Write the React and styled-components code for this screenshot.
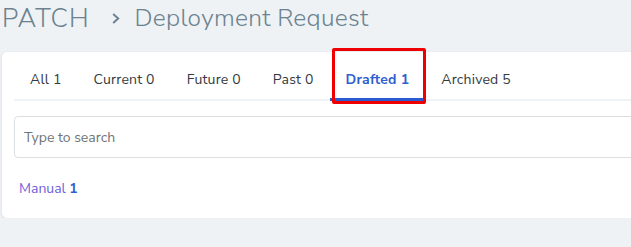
import React from "react";
import styled, { createGlobalStyle } from "styled-components";

const GlobalStyle = createGlobalStyle`
  html, body {
    margin: 0;
    padding: 0;
    background: #eef2f5;
    font-family: "Nunito Sans", Lato, "Open Sans", sans-serif;
    overflow: hidden;
  }
`;

const Page = styled.div`
  padding: 0 0 0 2px;
  width: 700px;
`;

const Header = styled.h1`
  display: flex;
  align-items: center;
  margin: 0;
  height: 36px;
  font-weight: 300;
  color: #6d8290;
`;

const Crumb = styled.span`
  font-size: ${(p) => p.size}px;
  letter-spacing: ${(p) => p.spacing}px;
`;

const Chevron = styled.svg`
  width: 8px;
  height: 11px;
  margin: 1px 15px 0 22px;
`;

const Card = styled.div`
  margin-top: 16px;
  background: #fff;
  border-radius: 5px;
  box-shadow: 0 1px 3px rgba(40, 60, 80, 0.12);
  padding: 0 0 18px 12px;
  height: 148px;
`;

const Tabs = styled.div`
  display: flex;
  border-bottom: 2px solid #eef3f7;
  height: 47px;
`;

const Tab = styled.div`
  position: relative;
  display: flex;
  align-items: center;
  padding: 8px 16px 0;
  font-size: 14px;
  letter-spacing: 0.2px;
  color: ${(p) => (p.active ? "#2f5fd0" : "#333a40")};
  font-weight: ${(p) => (p.active ? 700 : 400)};
  border-bottom: 3px solid ${(p) => (p.active ? "#2a5bd0" : "transparent")};
  margin-bottom: -2px;
`;

const Highlight = styled.div`
  position: absolute;
  left: 2px;
  right: -1px;
  top: -4px;
  bottom: -6px;
  border: 3px solid #ee0000;
  border-radius: 2px;
  pointer-events: none;
`;

const Search = styled.input`
  display: block;
  box-sizing: border-box;
  margin-top: 15px;
  width: 100%;
  height: 42px;
  border: 1px solid #dcdfe2;
  border-radius: 4px;
  padding: 0 9px;
  font-family: inherit;
  font-size: 14px;
  color: #333;
  outline: none;
  &::placeholder {
    color: #6f7478;
  }
`;

const Filter = styled.div`
  margin: 21px 0 0 5px;
  font-size: 14px;
  color: #6f62d8;
`;

const Count = styled.span`
  color: #2f5fd0;
  font-weight: 700;
`;

const tabs = [
  { label: "All", n: 1 },
  { label: "Current", n: 0 },
  { label: "Future", n: 0 },
  { label: "Past", n: 0 },
  { label: "Drafted", n: 1, active: true },
  { label: "Archived", n: 5 },
];

export default function App() {
  return (
    <Page>
      <GlobalStyle />
      <Header>
        <Crumb size={26} spacing={1}>PATCH</Crumb>
        <Chevron viewBox="0 0 8 11">
          <path d="M1.2 1 L6.2 5.5 L1.2 10" fill="none" stroke="#6d8290" strokeWidth="2" />
        </Chevron>
        <Crumb size={24.5} spacing={0.3}>Deployment Request</Crumb>
      </Header>
      <Card>
        <Tabs>
          {tabs.map((t) => (
            <Tab key={t.label} active={t.active}>
              {t.label} {t.n}
              {t.active && <Highlight />}
            </Tab>
          ))}
        </Tabs>
        <Search placeholder="Type to search" />
        <Filter>
          Manual <Count>1</Count>
        </Filter>
      </Card>
    </Page>
  );
}
